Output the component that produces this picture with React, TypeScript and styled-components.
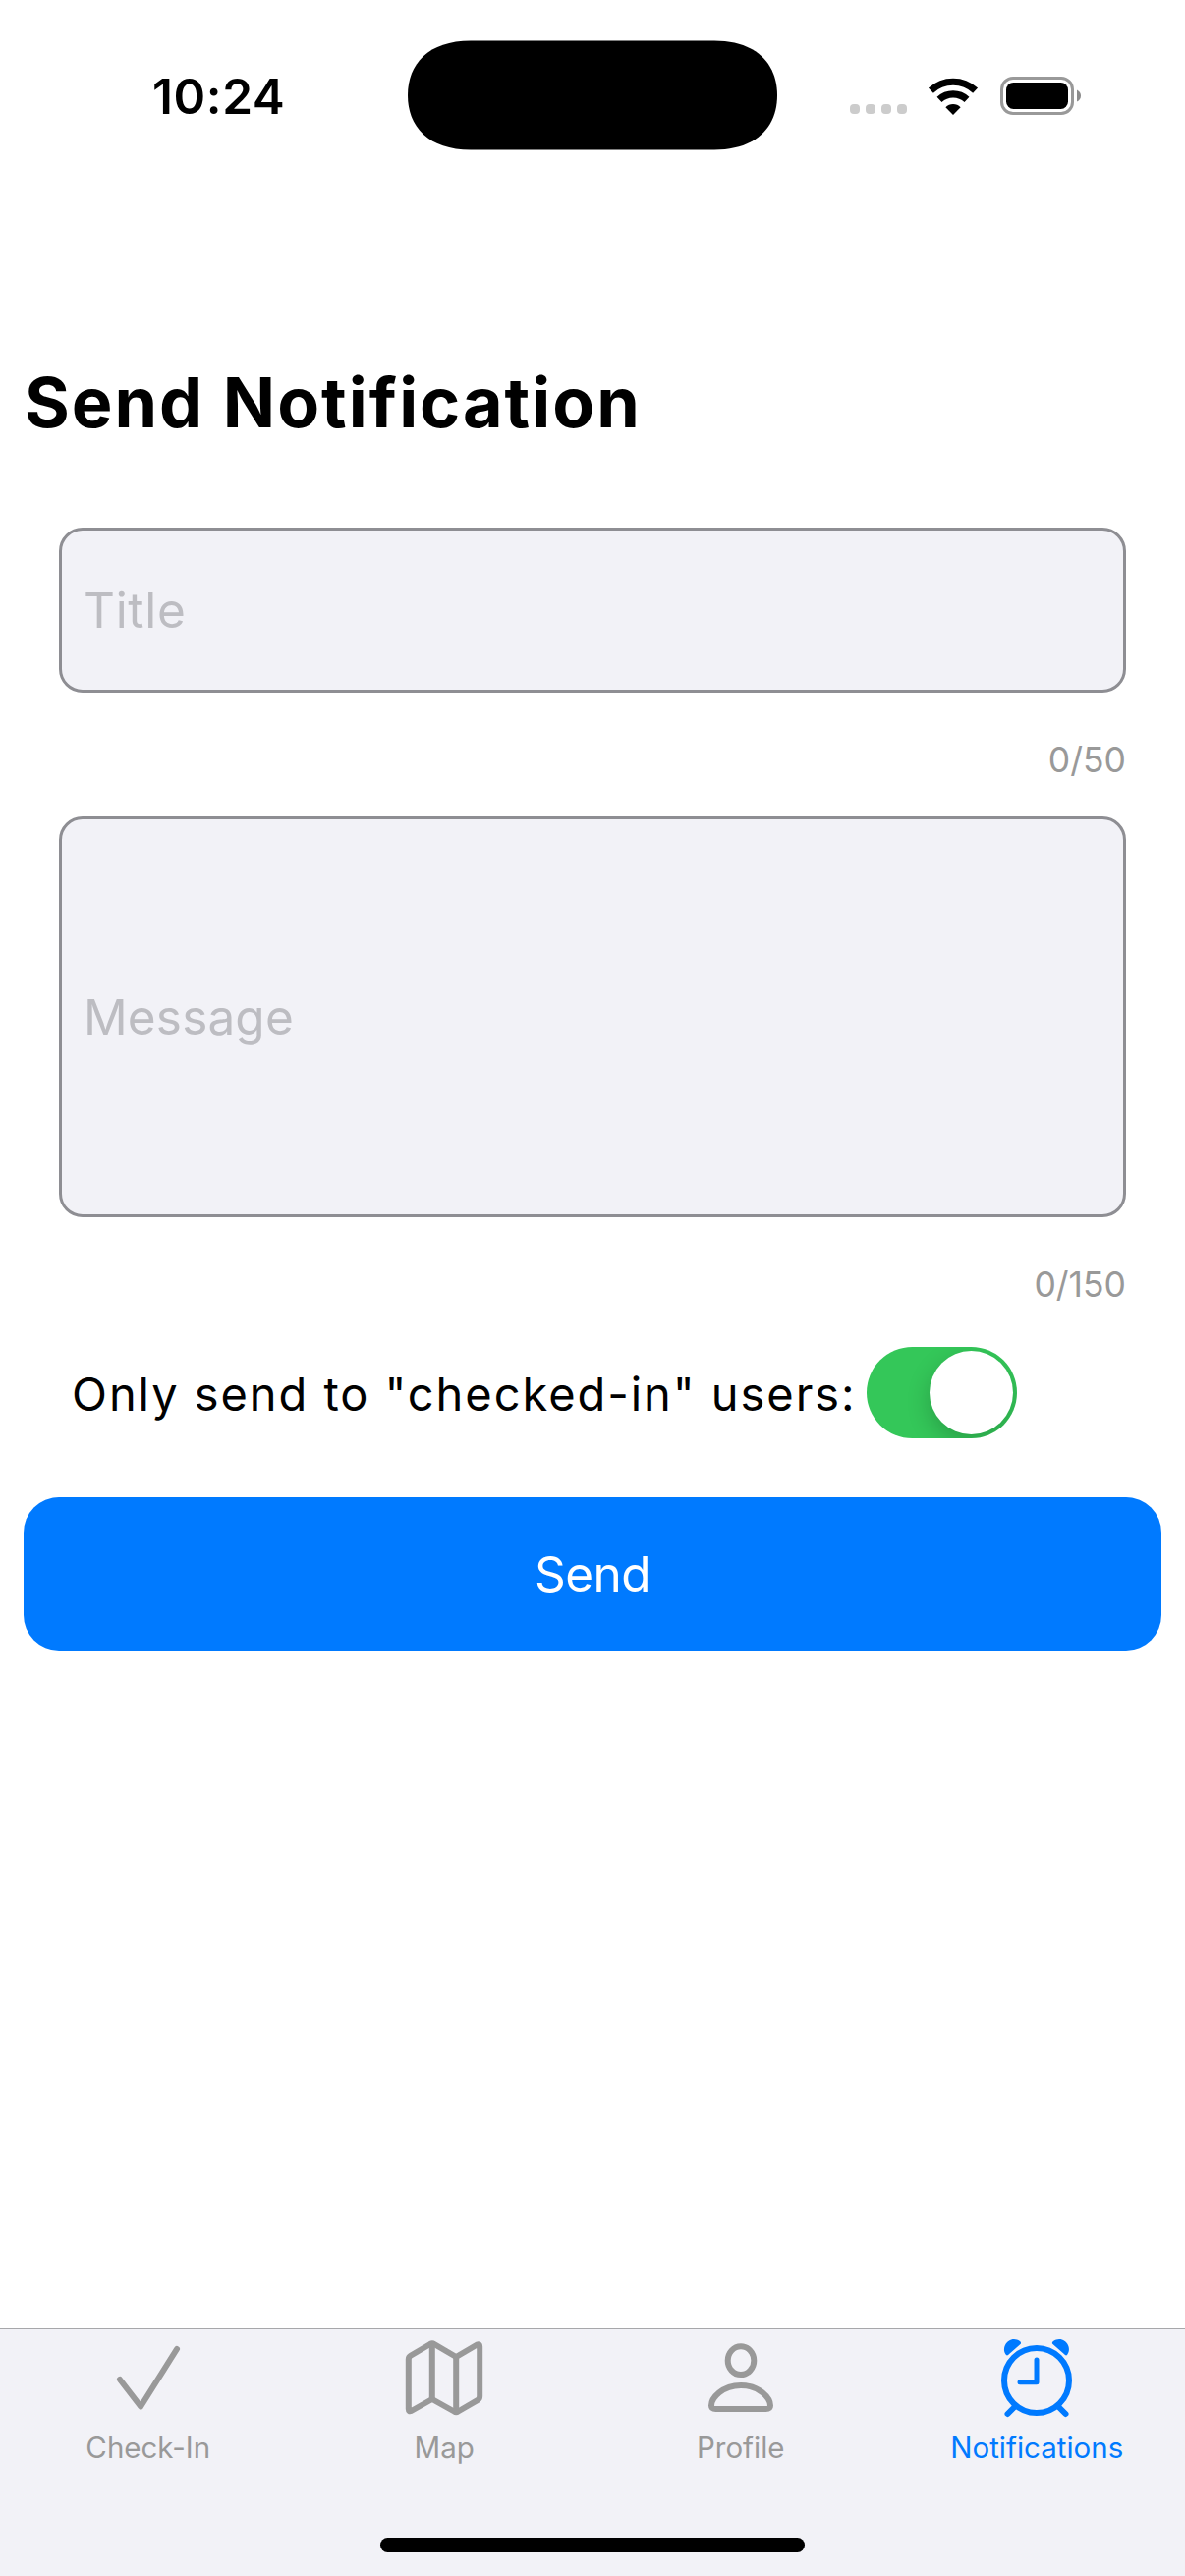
import React, { useState } from "react";
import styled, { createGlobalStyle, css } from "styled-components";

const GlobalStyle = createGlobalStyle`
  * { box-sizing: border-box; }
  body {
    margin: 0;
    background: #fff;
    font-family: Inter, "Liberation Sans", sans-serif;
    font-feature-settings: "calt" 0;
  }
  button, input { font-family: inherit; }
`;

const Screen = styled.div`
  width: 1206px;
  height: 2622px;
  display: flex;
  flex-direction: column;
  background: #fff;
  overflow: hidden;
`;

const StatusBar = styled.header`
  height: 177px;
  display: grid;
  grid-template-columns: 415px 376px 415px;
  align-items: start;
`;

const Clock = styled.time`
  padding: 67px 0 0 155px;
  font-size: 49.5px;
  line-height: 62px;
  font-weight: 600;
  letter-spacing: 0.6px;
  white-space: nowrap;
`;

const Indicators = styled.div`
  display: flex;
  align-items: flex-end;
  padding: 78px 0 0 74px;
`;

const SignalDots = styled.div`
  display: flex;
  gap: 6px;
  margin-bottom: 1px;
`;

const Dot = styled.span`
  width: 10px;
  height: 10px;
  border-radius: 4px;
  background: #ccc;
`;

const WifiIcon = styled.svg`
  width: 52px;
  height: 38px;
  margin: 0 22px 0 21px;
`;

const BatteryIcon = styled.svg`
  width: 83px;
  height: 39px;
`;

const Main = styled.main`
  flex: 1;
  display: flex;
  flex-direction: column;
  padding: 0 24px;
`;

const Heading = styled.h1`
  margin: 189px 0 83px 1px;
  font-size: 70px;
  line-height: 88px;
  font-weight: 700;
  letter-spacing: 2px;
  white-space: nowrap;
`;

const Fields = styled.div`
  display: flex;
  flex-direction: column;
  padding: 0 36px;
`;

const Field = styled.input<{ $height: number; $tracking: number }>`
  width: 100%;
  height: ${(p) => p.$height}px;
  padding: 0 21px 0 22px;
  border: 3px solid #8e8e93;
  border-radius: 24px;
  background: #f2f2f7;
  outline: none;
  font-size: 49.5px;
  letter-spacing: ${(p) => p.$tracking}px;
  color: #000;
  &::placeholder { color: #bdbdc2; opacity: 1; }
`;

const Counter = styled.span<{ $height: number }>`
  height: ${(p) => p.$height}px;
  padding-top: 47px;
  text-align: right;
  font-size: 35.5px;
  line-height: 44px;
  color: #999;
`;

const ToggleRow = styled.div`
  display: flex;
  align-items: center;
  height: 93px;
  padding-left: 49px;
`;

const ToggleLabel = styled.span`
  width: 809px;
  padding-top: 2px;
  font-size: 47px;
  line-height: 60px;
  letter-spacing: 1.95px;
  white-space: nowrap;
`;

const Switch = styled.button<{ $on: boolean }>`
  width: 153px;
  height: 93px;
  padding: 4px;
  border: 0;
  border-radius: 47px;
  display: flex;
  justify-content: ${(p) => (p.$on ? "flex-end" : "flex-start")};
  background: ${(p) => (p.$on ? "#34c759" : "#e9e9ea")};
  overflow: hidden;
`;

const Knob = styled.span`
  width: 85px;
  height: 85px;
  border-radius: 50%;
  background: #fff;
  box-shadow: 0 9px 24px rgba(0, 0, 0, 0.2);
`;

const SendButton = styled.button`
  height: 156px;
  margin-top: 60px;
  border: 0;
  border-radius: 36px;
  background: #007aff;
  color: #fff;
  font-size: 49.5px;
  letter-spacing: -0.5px;
`;

const TabBar = styled.nav`
  height: 252px;
  border-top: 1px solid #a7a7aa;
  background: #f2f2f7;
  display: flex;
  flex-direction: column;
  align-items: center;
`;

const Tabs = styled.div`
  width: 100%;
  height: 212px;
  display: grid;
  grid-template-columns: repeat(4, 1fr);
`;

const Tab = styled.a<{ $active?: boolean }>`
  display: flex;
  flex-direction: column;
  align-items: center;
  padding-top: 4px;
  font-size: 29.5px;
  line-height: 36px;
  font-weight: 400;
  color: #999;
  ${(p) => p.$active && css`color: #007aff;`}
`;

const TabIcon = styled.svg`
  width: 96px;
  height: 96px;
  margin-bottom: 2px;
  fill: none;
  stroke: currentColor;
  stroke-width: 6;
  stroke-linecap: round;
  stroke-linejoin: round;
`;

const HomeIndicator = styled.div`
  width: 432px;
  height: 15px;
  border-radius: 8px;
  background: #000;
`;

const Wifi = () => (
  <WifiIcon viewBox="0 0 52 38" fill="none" stroke="#000" strokeWidth="7.2">
    <path d="M3.4 13.2 A33 33 0 0 1 48.6 13.2" />
    <path d="M12 22.4 A20.5 20.5 0 0 1 40 22.4" />
    <path d="M26 38 L18.4 30.2 A10.8 10.8 0 0 1 33.6 30.2 Z" fill="#000" stroke="none" />
  </WifiIcon>
);

const Battery = () => (
  <BatteryIcon viewBox="0 0 83 39">
    <rect x="1.5" y="1.5" width="72" height="36" rx="11.5" fill="none" stroke="#999" strokeWidth="3" />
    <rect x="6" y="6" width="63" height="27" rx="7.5" fill="#000" />
    <path d="M78 13.5 Q82 15.5 82 19.5 Q82 23.5 78 25.5 Z" fill="#8c8c8c" />
  </BatteryIcon>
);

const Island = () => (
  <svg width="376" height="154" viewBox="0 0 376 154">
    <path
      d="M64 41.5 H312 C355 41.5 376 65 376 97 C376 129 355 152.5 312 152.5 H64 C21 152.5 0 129 0 97 C0 65 21 41.5 64 41.5 Z"
      fill="#000"
    />
  </svg>
);

export default function App() {
  const [title, setTitle] = useState("");
  const [message, setMessage] = useState("");
  const [checkedInOnly, setCheckedInOnly] = useState(true);

  return (
    <Screen>
      <GlobalStyle />
      <StatusBar>
        <Clock>10:24</Clock>
        <Island />
        <Indicators>
          <SignalDots>
            <Dot />
            <Dot />
            <Dot />
            <Dot />
          </SignalDots>
          <Wifi />
          <Battery />
        </Indicators>
      </StatusBar>

      <Main>
        <Heading>Send Notification</Heading>
        <Fields>
          <Field $height={168} $tracking={0.7} placeholder="Title" maxLength={50} value={title} onChange={(e) => setTitle(e.target.value)} />
          <Counter $height={126}>{title.length}/50</Counter>
          <Field $height={408} $tracking={0.15} placeholder="Message" maxLength={150} value={message} onChange={(e) => setMessage(e.target.value)} />
          <Counter $height={132}>{message.length}/150</Counter>
        </Fields>
        <ToggleRow>
          <ToggleLabel>Only send to "checked-in" users:</ToggleLabel>
          <Switch $on={checkedInOnly} onClick={() => setCheckedInOnly(!checkedInOnly)}>
            <Knob />
          </Switch>
        </ToggleRow>
        <SendButton>Send</SendButton>
      </Main>

      <TabBar>
        <Tabs>
          <Tab>
            <TabIcon viewBox="0 0 96 96">
              <path d="M19 47 L40.2 74.5 L77 16" />
            </TabIcon>
            Check-In
          </Tab>
          <Tab>
            <TabIcon viewBox="0 0 96 96">
              <path d="M11.8 26.5 Q11.8 24 13.8 22.8 L33.8 11 Q36 9.8 38 11 L60.2 24 L81.5 11.5 Q84.2 10.5 84.2 13.5 V64 Q84.2 66.5 82.2 67.8 L62.2 79.5 Q60.2 80.8 58.2 79.5 L35.8 67 L14.5 79 Q11.8 80 11.8 77 Z" />
              <path d="M35.8 11 V67 M60.2 24 V80" />
            </TabIcon>
            Map
          </Tab>
          <Tab>
            <TabIcon viewBox="0 0 96 96">
              <ellipse cx="48" cy="27.7" rx="13.3" ry="14.4" />
              <path d="M18 73.5 C18 66 29 53 48 53 C67 53 78 66 78 73.5 Q78 77 73.5 77 H22.5 Q18 77 18 73.5 Z" />
            </TabIcon>
            Profile
          </Tab>
          <Tab $active>
            <TabIcon viewBox="0 0 96 96">
              <circle cx="48" cy="48" r="33" />
              <path d="M48 27 V49.7 H31" strokeWidth="5" />
              <path d="M26 74.5 L18.5 82 M70 74.5 L77.5 82" />
              <path d="M17 22 C12 16 17 6 25 6 C29 6 34 9 31.5 11 L19 22 Q18 22.8 17 22 Z M79 22 C84 16 79 6 71 6 C67 6 62 9 64.5 11 L77 22 Q78 22.8 79 22 Z" fill="currentColor" stroke="none" />
            </TabIcon>
            Notifications
          </Tab>
        </Tabs>
        <HomeIndicator />
      </TabBar>
    </Screen>
  );
}
